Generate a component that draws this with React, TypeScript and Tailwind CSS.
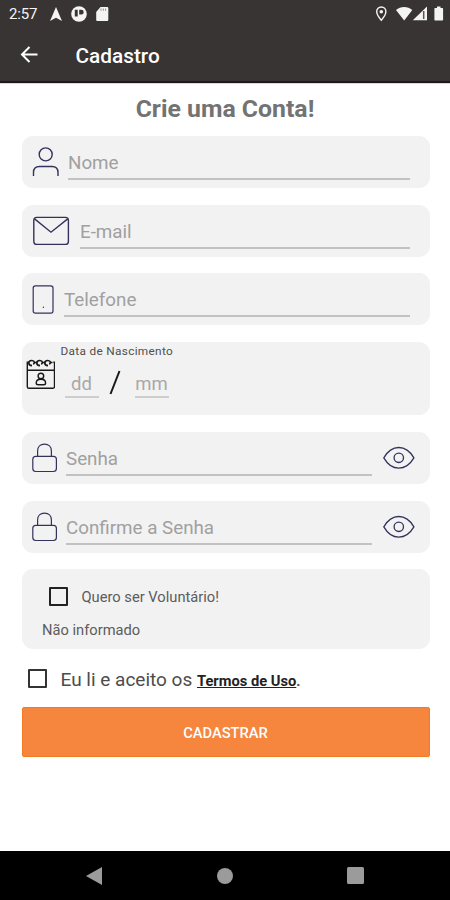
import type { ReactNode } from "react";

const NAVY = "#34325c";

function UserIcon() {
  return (
    <svg className="h-[52px] w-[46px] shrink-0" viewBox="0 0 46 52" fill="none" stroke={NAVY} strokeWidth="1.4">
      <circle cx="23.7" cy="18.4" r="6.5" />
      <path d="M11.5 40v-3.5c0-4 2-6 6-6H30c4 0 6 2 6 6V40" />
    </svg>
  );
}

function MailIcon() {
  return (
    <svg className="h-[52px] w-[58px] shrink-0" viewBox="0 0 58 52" fill="none" stroke={NAVY} strokeWidth="1.4">
      <rect x="11.8" y="12.4" width="34.6" height="27" rx="3" />
      <path d="M12.6 13.9L29 27.200l16.7-13.3" />
    </svg>
  );
}

function PhoneIcon() {
  return (
    <svg className="h-[52px] w-[42px] shrink-0" viewBox="0 0 42 52" fill="none" stroke={NAVY} strokeWidth="1.2">
      <rect x="11.2" y="12.8" width="19.8" height="27.4" rx="2.2" />
      <circle cx="21.4" cy="34.300" r=".7" fill={NAVY} stroke="none" />
    </svg>
  );
}

function LockIcon() {
  return (
    <svg className="h-[52px] w-[44px] shrink-0" viewBox="0 0 44 52" fill="none" stroke={NAVY} strokeWidth="1.2">
      <path d="M15.6 24.3v-5.400c0-4 2.8-6.800 6.900-6.800s6.900 2.800 6.900 6.800v5.400" />
      <rect x="10.8" y="24.3" width="23.6" height="15.200" rx="3" />
    </svg>
  );
}

function EyeIcon() {
  return (
    <svg className="h-[52px] w-[58px] shrink-0" viewBox="0 0 58 52" fill="none" stroke={NAVY} strokeWidth="1.3">
      <path d="M11.800 25.800C15.600 19.300 20.800 15.500 26.700 15.500s11.400 3.800 15.200 10.300C38.100 32.300 32.600 36.100 26.700 36.100S15.600 32.300 11.800 25.800z" />
      <circle cx="26.800" cy="25.800" r="4.700" />
    </svg>
  );
}

function CalendarIcon() {
  return (
    <svg className="h-[34px] w-[32px]" viewBox="0 0 32 34" fill="none" stroke="#191919" strokeWidth="1.400">
      <path d="M5.500 6.200H4.300V30.700c0 1 .6 1.600 1.600 1.600h24c1 0 1.600-.6 1.600-1.600V6.200h-1.200M4.300 14.200h27.200" />
      <path d="M9 9.600C4.600 9.400 5 4.300 8.800 4.500c3 .2 3.400 2.800 1.400 3.600M17 9.600c-4.400-.2-4-5.300-.2-5.100 3 .2 3.400 2.800 1.400 3.600M25 9.600c-4.400-.2-4-5.300-.2-5.100 3 .2 3.400 2.800 1.400 3.600" strokeWidth="1.700" />
      <path d="M12 6.500h2.500M20 6.500h2.500M28 6.500h1.500" strokeWidth="1.300" />
      <circle cx="17.900" cy="20" r="2.800" />
      <path d="M15.200 28.700c-1.500 0-2-.8-2-1.800 0-2 1.800-3.600 4.700-3.600s4.700 1.600 4.700 3.600c0 1-.5 1.800-2 1.800z" />
    </svg>
  );
}

function Card({ className, children }: { className: string; children: ReactNode }) {
  return <div className={`w-[408px] shrink-0 rounded-[11px] bg-[#f2f2f2] ${className}`}>{children}</div>;
}

function Field({ icon, label, size = "text-[18.800px]", trailing }: { icon: ReactNode; label: string; size?: string; trailing?: ReactNode }) {
  return (
    <Card className="flex h-[52px]">
      {icon}
      <div className="flex h-[44px] flex-1 items-end border-b-2 border-[#c2c2c2] pb-[4px]">
        <span className={`ml-[0.500px] whitespace-nowrap leading-[22px] text-[#a0a0a0] ${size}`}>{label}</span>
      </div>
      {trailing ?? <div className="w-[20px]" />}
    </Card>
  );
}

function StatusBar() {
  return (
    <div className="flex h-[27px] items-center justify-between pl-[9px] pr-[6px] text-[#f4f4f4]">
      <div className="flex items-center">
        <span className="w-[40px] pt-[1px] text-[15px] leading-[26px] tracking-[-0.200px]">2:57</span>
        <svg className="h-[18px] w-[62px]" viewBox="0 0 62 18" fill="currentColor">
          <path d="M7 2L13 16 7 12.800 1 16z" />
          <circle cx="30" cy="9" r="7.800" />
          <path d="M25.800 4.800h2.900v6.600h-2.900zM30.200 4.800h2.100a2.400 2.400 0 010 4.800h-2.100z" fill="#393434" />
          <path d="M51.500 2H58c.8 0 1.300.5 1.300 1.300v11.400c0 .8-.5 1.300-1.300 1.300H48.500c-.8 0-1.300-.5-1.300-1.300V7z" />
          <path d="M52 3.500v2.300M54.300 3.500v2.300M56.600 3.500v2.300" stroke="#777" strokeWidth=".8" />
        </svg>
      </div>
      <svg className="h-[18px] w-[70px]" viewBox="0 0 70 18" fill="currentColor">
        <path d="M7.300 2a4.600 4.600 0 00-4.600 4.600c0 3.400 4.600 8.700 4.600 8.700s4.600-5.300 4.600-8.700A4.600 4.600 0 007.300 2z" fill="none" stroke="currentColor" strokeWidth="1.400" />
        <circle cx="7.300" cy="6.800" r="1.800" />
        <path d="M22 5c4.600-4.100 11.700-4.100 16.300 0L30.200 15.500z" />
        <path d="M38.800 15.300L53 1.500v13.800z" />
        <path d="M49.700 6v8" stroke="#5a5555" strokeWidth="1.500" />
        <path d="M61.400 3H63V1.500h3.500V3h1.600c.6 0 1 .4 1 1v10.500c0 .6-.4 1-1 1H61.400c-.6 0-1-.4-1-1V4c0-.6.4-1 1-1z" />
      </svg>
    </div>
  );
}

export default function App() {
  return (
    <div className="flex h-[900px] w-[450px] flex-col overflow-hidden bg-white font-[Roboto,sans-serif]">
      <header className="h-[83px] shrink-0 border-b-2 border-[#211719] bg-[#393434]">
        <StatusBar />
        <div className="flex h-[56px] items-center pl-[20px]">
          <svg className="h-[18px] w-[18px]" viewBox="0 0 18 18" fill="none" stroke="#fff" strokeWidth="2">
            <path d="M17.500 8.500H2M9.500 1L2 8.500 9.500 16" />
          </svg>
          <h1 className="ml-[37.500px] pt-[1px] text-[20.800px] font-medium leading-[24px] text-white">Cadastro</h1>
        </div>
      </header>

      <main className="flex flex-1 flex-col items-center border-t border-[#d8d8d8]">
        <h2 className="mb-[3px] flex h-[49px] items-center whitespace-nowrap text-[24.800px] font-bold text-[#737373]">Crie uma Conta!</h2>

        <div className="ml-[1px] flex flex-col gap-[16.700px]">
          <Field icon={<UserIcon />} label="Nome" />
          <Field icon={<MailIcon />} label="E-mail" />
          <Field icon={<PhoneIcon />} label="Telefone" />

          <Card className="flex h-[73.300px]">
            <div className="w-[34px] pl-[1px] pt-[14px]">
              <CalendarIcon />
            </div>
            <div className="pl-[5px] pt-[2px]">
              <p className="whitespace-nowrap text-[11.800px] leading-[14px] tracking-[0.320px] text-[#505050]">Data de Nascimento</p>
              <div className="ml-[4px] mt-[9px] flex h-[31px]">
                <span className="w-[34px] border-b-2 border-[#cecece] text-center text-[18.500px] leading-[34px] text-[#a8a8a8]">dd</span>
                <svg className="h-[31px] w-[36px]" viewBox="0 0 36 31">
                  <path d="M11.500 27L20.500 4" stroke="#181818" strokeWidth="2" />
                </svg>
                <span className="w-[34px] border-b-2 border-[#cecece] text-center text-[18.500px] leading-[34px] text-[#a8a8a8]">mm</span>
              </div>
            </div>
          </Card>

          <Field icon={<LockIcon />} label="Senha" trailing={<EyeIcon />} />
          <Field icon={<LockIcon />} label="Confirme a Senha" trailing={<EyeIcon />} />

          <Card className="h-[80px] pt-[17px]">
            <div className="flex h-[20px] items-center pl-[27px]">
              <span className="h-[19px] w-[19px] rounded-[1px] border-2 border-[#222]" />
              <span className="ml-[14px] whitespace-nowrap pt-[1px] text-[14.700px] text-[#5c5c5c]">Quero ser Voluntário!</span>
            </div>
            <p className="mt-[15px] pl-[20.500px] text-[14.700px] leading-[18px] text-[#5c5c5c]">Não informado</p>
          </Card>
        </div>

        <div className="ml-[1px] flex h-[58px] w-[408px] items-center pl-[6px] pt-[2px]">
          <span className="mb-[1px] h-[19px] w-[19px] rounded-[1px] border-2 border-[#333]" />
          <p className="ml-[14px] whitespace-nowrap pt-[1px] text-[19px] text-[#4c4c4c]">
            Eu li e aceito os <span className="text-[14.700px] font-bold text-[#222] underline">Termos de Uso</span>
            <span className="text-[14.500px] font-bold">.</span>
          </p>
        </div>

        <button className="ml-[1px] h-[50px] w-[408px] rounded-[2px] border border-[#f27a22] bg-[#f6853d] pt-[2px] text-[14.700px] font-medium text-white">CADASTRAR</button>
      </main>

      <nav className="flex h-[49px] shrink-0 items-center justify-between bg-black pl-[86px] pr-[86px]">
        <svg className="h-[18px] w-[16px]" viewBox="0 0 16 18" fill="#9b9b9b"><path d="M16 0v18L0 9z" /></svg>
        <span className="h-[16px] w-[16px] rounded-full bg-[#9b9b9b]" />
        <span className="h-[17px] w-[17px] rounded-[1.500px] bg-[#9b9b9b]" />
      </nav>
    </div>
  );
}
